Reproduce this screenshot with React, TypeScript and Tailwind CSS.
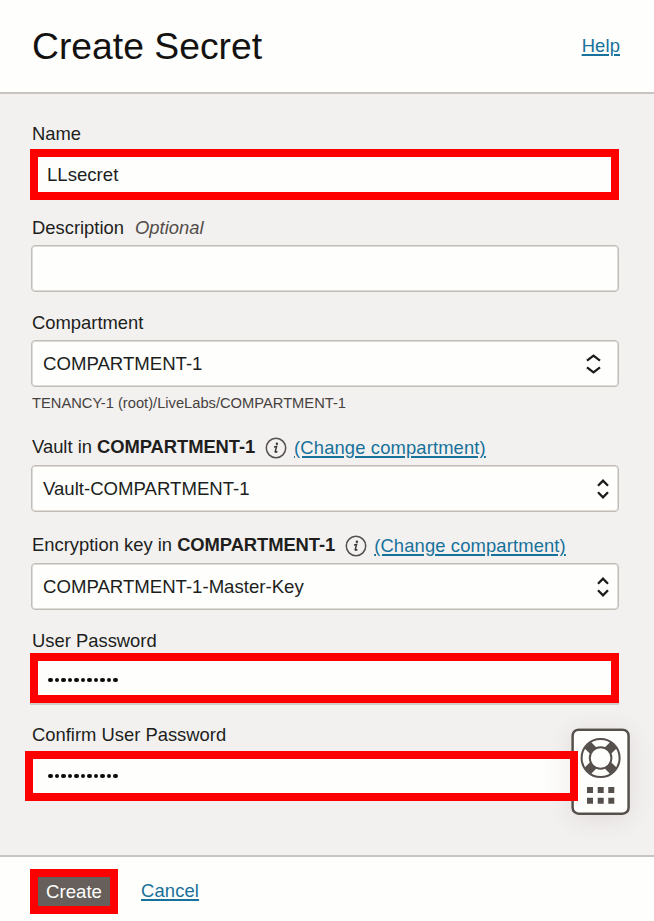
import type { ReactNode } from "react";

const link = "text-[#17719b] underline decoration-[1.5px] underline-offset-[2px] tracking-[0.13px]";

function Label({ className, children }: { className: string; children: ReactNode }) {
  return <div className={`flex h-6 items-center whitespace-pre pl-8 ${className}`}>{children}</div>;
}

function Box({ className, children }: { className: string; children?: ReactNode }) {
  return (
    <div
      className={`ml-[31px] flex h-[47px] w-[588px] items-center justify-between rounded-[4px] border border-[#c2bcb7] bg-[#fefefc] pl-[11px] text-[18.6px] shadow-[inset_0_0_0_1px_#dfdbd8] ${className}`}
    >
      {children}
    </div>
  );
}

function Chevrons({ w }: { w: number }) {
  return (
    <svg width={w} height="20" viewBox={`0 0 ${w} 20`} fill="none" stroke="#1d1b1a" strokeWidth="2.3">
      <path d={`M1 6.7 L${w / 2} 1.7 L${w - 1} 6.7 M1 13.3 L${w / 2} 18.3 L${w - 1} 13.3`} />
    </svg>
  );
}

function Info() {
  return (
    <svg className="ml-[10px] mr-[7px] mt-[2px]" width="22" height="22" viewBox="0 0 22 22">
      <circle cx="11" cy="11" r="9.7" fill="none" stroke="#55504c" strokeWidth="1.5" />
      <circle cx="11.9" cy="6.7" r="1.2" fill="#3d3936" />
      <path d="M9 9.9 L11.6 9.5 L10.2 14.6 Q10.1 15.9 12.4 14.3" fill="none" stroke="#3d3936" strokeWidth="1.5" />
    </svg>
  );
}

function Dots() {
  return (
    <div className="flex gap-[2px]">
      {Array.from({ length: 11 }, (_, i) => (
        <span key={i} className="size-[4.55px] rounded-full bg-[#0c0c0c]" />
      ))}
    </div>
  );
}

function HelpWidget() {
  return (
    <div className="absolute left-[571px] top-[728px] h-[87px] w-[59px] rounded-[8px] bg-[#fefefc] shadow-[0_4px_24px_rgba(60,50,40,0.11)]">
      <svg width="59" height="87" viewBox="0 0 59 87">
        <rect x="1.6" y="1.7" width="56" height="84" rx="6" fill="none" stroke="#55504c" strokeWidth="2.5" />
        <g fill="none" stroke="#55504c">
          <circle cx="29.6" cy="30" r="19" strokeWidth="2" />
          <circle cx="29.6" cy="30" r="10.8" strokeWidth="2" />
          <path d="M22.2 22.6 L16.6 17 M37 22.6 L42.6 17 M22.2 37.4 L16.6 43 M37 37.4 L42.6 43" strokeWidth="9" />
        </g>
        <path
          fill="#55504c"
          d="M16 59h6v6h-6z M26.7 59h6v6h-6z M37.3 59h6v6h-6z M16 69.7h6v6h-6z M26.7 69.7h6v6h-6z M37.3 69.7h6v6h-6z"
        />
      </svg>
    </div>
  );
}

export default function App() {
  return (
    <div className="relative flex h-[921px] w-[654px] flex-col overflow-hidden bg-[#f3f1f0] font-['Liberation_Sans',Arial,sans-serif] text-[18.4px] leading-6 text-[#201e1c]">
      <header className="flex h-[94px] shrink-0 items-center justify-between border-b-2 border-[#c9c4c0] bg-[#fefefc] pl-8 pr-[34px]">
        <h1 className="text-[37.3px] leading-[44px] text-[#141210]">Create Secret</h1>
        <a className={link}>Help</a>
      </header>

      <main className="flex h-[761px] shrink-0 flex-col">
        <Label className="mt-7">Name</Label>
        <div className="ml-[30px] mt-[3px] flex h-[51px] w-[589px] items-center border-8 border-[#ff0000] bg-[#fefefc] pl-[9px] text-[18.6px]">LLsecret</div>

        <Label className="mt-4">
          Description<span className="ml-[11px] italic text-[#524d49]">Optional</span>
        </Label>
        <Box className="mt-[5px]" />

        <Label className="mt-[19px]">Compartment</Label>
        <Box className="mt-[5px] pr-[17px]">
          COMPARTMENT-1
          <Chevrons w={15} />
        </Box>
        <div className="mt-[6px] h-5 whitespace-nowrap pl-8 text-[14.7px] leading-5 text-[#45413e]">TENANCY-1 (root)/LiveLabs/COMPARTMENT-1</div>

        <Label className="mt-[22px]">
          Vault in <b className="tracking-[-0.08px]">COMPARTMENT-1</b>
          <Info />
          <a className={`${link} mt-[2px]`}>(Change compartment)</a>
        </Label>
        <Box className="mt-[6px] pr-[9px]">
          Vault-COMPARTMENT-1
          <Chevrons w={12} />
        </Box>

        <Label className="mt-[21px]">
          Encryption key in <b className="tracking-[-0.08px]">COMPARTMENT-1</b>
          <Info />
          <a className={`${link} mt-[2px]`}>(Change compartment)</a>
        </Label>
        <Box className="mt-[6px] pr-[9px]">
          COMPARTMENT-1-Master-Key
          <Chevrons w={12} />
        </Box>

        <Label className="mt-[19px]">User Password</Label>
        <div className="ml-[30px] flex h-[50px] w-[589px] items-center border-8 border-[#ff0000] bg-[#fefefc] pl-[10px] pt-1 shadow-[0_2px_0_#d2cdca]">
          <Dots />
        </div>

        <Label className="mt-5">Confirm User Password</Label>
        <div className="relative z-10 ml-[25px] mt-1 flex h-[50px] w-[553px] items-center border-8 border-[#ff0000] bg-linear-to-r from-[#fefefc] from-95% to-[#f6f5f3] pl-[15px]">
          <Dots />
        </div>
      </main>

      <footer className="flex h-[66px] shrink-0 items-start border-t-2 border-[#c9c4c0] bg-[#fefefc] pl-[30px] pt-3">
        <button className="flex h-[45px] w-[88px] items-center justify-center border-8 border-[#ff0000] bg-[#665f5b] text-[18.6px] text-white">Create</button>
        <a className={`${link} ml-[23px] mt-[10px]`}>Cancel</a>
      </footer>

      <HelpWidget />
    </div>
  );
}
